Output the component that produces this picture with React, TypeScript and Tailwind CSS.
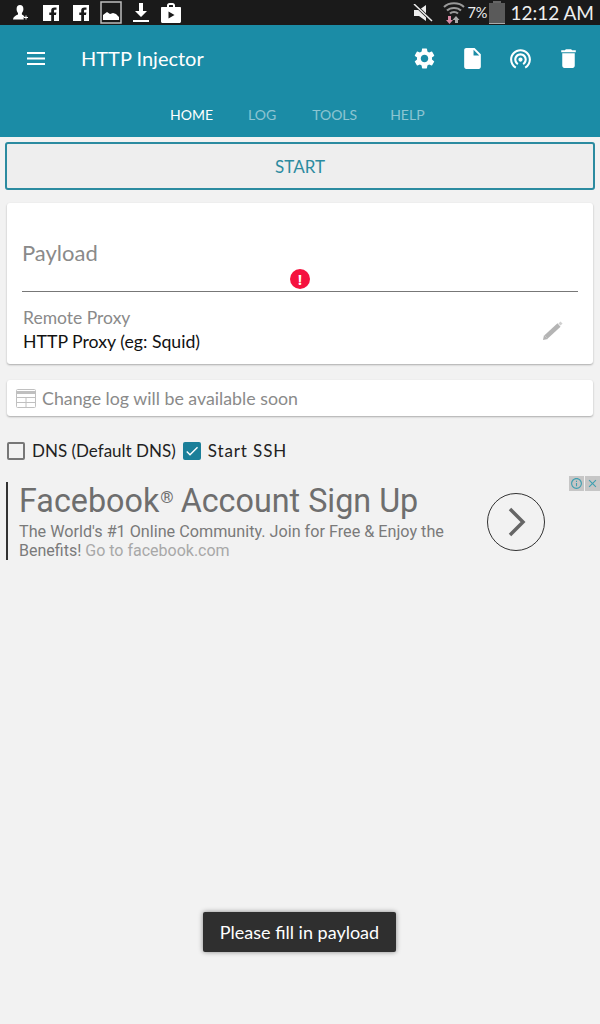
import { MdSettings, MdInsertDriveFile, MdWifiTethering, MdDelete, MdCheck, MdClose, MdInfoOutline } from 'react-icons/md';

const hand = 'font-["Lato",sans-serif]';

function FbIcon() {
  return (
    <svg width="16" height="16" viewBox="0 0 16 16" className="shrink-0">
      <path fill="#fff" d="M0 0h16v16h-5v-6h2l.4-2.6H11V6c0-.8.3-1.2 1.2-1.2h1.3V2.500h-2C9.300 2.500 8.200 3.700 8.200 5.700v1.700H6.300V10h1.900v6H0z" />
    </svg>
  );
}

function StatusLeft() {
  return (
    <div className="flex items-center">
      <svg width="16" height="16" viewBox="0 0 16 16" className="ml-[13px]">
        <path fill="#fff" d="M7 0c2.200 0 3.400 1.600 3.400 3.900 0 1.700-.7 3.100-1.500 4v1.600c1.300.6 2 1.300 2.600 2-.6.500-.9 1.100-.9 1.800 0 .5.100.9.300 1.300H0c0-2.500 2.700-4.200 5-5.100V7.900C4.200 7 3.600 5.600 3.600 3.900 3.600 1.600 4.800 0 7 0z" />
        <path fill="#fff" d="M12.500 10.500h1v1.500H15v1h-1.500v1.500h-1V13H11v-1h1.500z" />
      </svg>
      <div className="ml-[14px]"><FbIcon /></div>
      <div className="ml-[14px]"><FbIcon /></div>
      <svg width="22" height="23" viewBox="0 0 22 23" className="ml-[11px]">
        <rect x="1" y="1" width="20" height="21" fill="none" stroke="#bdbdbd" strokeWidth="1.500" />
        <path fill="#fff" d="M3 19v-5l4-3 3 2 3-1 3 1 3 3v3z" />
      </svg>
      <svg width="16" height="20" viewBox="0 0 16 20" className="ml-[11px]">
        <path fill="#fff" d="M6 0h4v8h4l-6 6-6-6h4zM0 17h16v2H0z" />
      </svg>
      <svg width="20" height="20" viewBox="0 0 20 20" className="ml-[12px]">
        <path fill="#fff" fillRule="evenodd" d="M6 4V2.500C6 1.200 7 0 8.500 0h3C13 0 14 1.200 14 2.500V4h5c.6 0 1 .4 1 1v13.500c0 .8-.7 1.500-1.500 1.500h-17C.7 20 0 19.300 0 18.500V5c0-.6.400-1 1-1zm2 0h4V2.500c0-.3-.2-.5-.5-.5h-3c-.3 0-.5.200-.5.500zM7.500 8.500v7l6-3.500z" />
      </svg>
    </div>
  );
}

function StatusRight() {
  return (
    <div className="flex items-center">
      <svg width="20" height="18" viewBox="0 0 20 18">
        <path fill="#eee" d="M1 6h5l7-5v16l-7-5H1z" />
        <path stroke="#1a1a1a" strokeWidth="3" d="M1 0l18 17" />
        <path stroke="#eee" strokeWidth="1.500" d="M1 0l18 17" />
      </svg>
      <svg width="22" height="23" viewBox="0 0 22 23" className="ml-[10px]">
        <path fill="none" stroke="#999" strokeWidth="2" d="M1 6c5-5 15-5 20 0M4 9.500c3.500-3.500 10.500-3.500 14 0M7 12.500c2-2 6-2 8 0" />
        <path fill="#d889a4" d="M5 15h3v4h2l-3.500 4L3 19h2z" />
        <path fill="#aaa" d="M13 15l3.500 4H15v3h-3v-3h-2.500z" />
      </svg>
      <span className={`ml-[2px] text-[14.500px] text-[#eee] ${hand}`}>7%</span>
      <div className="ml-[2px] flex flex-col items-center">
        <div className="h-[2px] w-[8px] bg-[#666]" />
        <div className="h-[20px] w-[16px] bg-[#5a5a5a]" />
        <div className="h-[1px] w-[16px] bg-[#aaa]" />
      </div>
      <span className={`ml-[5px] text-[19px] leading-none text-[#eee] ${hand}`}>12:12 AM</span>
    </div>
  );
}

function Tab({ label, active, className }: { label: string; active?: boolean; className?: string }) {
  return (
    <span className={`text-[14px] ${hand} ${active ? 'text-white' : 'text-white/50'} ${className ?? ''}`}>{label}</span>
  );
}

export default function App() {
  return (
    <div className="relative flex h-[1024px] w-[600px] flex-col overflow-hidden bg-[#f2f2f2]">
      {/* status bar */}
      <div className="flex h-[25px] items-center justify-between bg-[#1a1a1a] pr-[6px]">
        <StatusLeft />
        <StatusRight />
      </div>

      {/* toolbar + tabs */}
      <div className="h-[112px] bg-[#1b8ca6]">
        <div className="flex h-[66px] items-center pl-[27px]">
          <svg width="18" height="13" viewBox="0 0 18 13">
            <path fill="#fff" d="M0 0h18v2H0zM0 5.500h18v2H0zM0 11h18v2H0z" />
          </svg>
          <span className={`ml-[36px] text-[20px] text-white ${hand}`}>HTTP Injector</span>
          <div className="ml-auto flex items-center gap-[23px] pr-[19px] text-white">
            <MdSettings size={25} />
            <MdInsertDriveFile size={25} />
            <MdWifiTethering size={25} />
            <MdDelete size={25} />
          </div>
        </div>
        <div className="flex pl-[170px] pt-[13px]">
          <Tab label="HOME" active />
          <Tab label="LOG" className="ml-[35px]" />
          <Tab label="TOOLS" className="ml-[36px]" />
          <Tab label="HELP" className="ml-[33px]" />
        </div>
      </div>

      {/* start button */}
      <button
        type="button"
        className={`mx-[5px] mt-[5px] h-[48px] rounded-[3px] border-2 border-[#2b8ba0] bg-[#eeeeee] pt-[2px] text-[17px] text-[#2b8ba0] ${hand}`}
      >
        START
      </button>

      {/* config card */}
      <div className="mx-[7px] mt-[13px] h-[161px] rounded-[3px] bg-white px-[15px] shadow-[0_1px_2px_rgba(0,0,0,0.3)]">
        <div className="relative flex h-[89px] items-end border-b border-[#777] pb-[27px]">
          <span className={`text-[22px] leading-none text-[#8a8a8a] ${hand}`}>Payload</span>
          <div className="absolute bottom-[2px] left-[268px] flex h-[20px] w-[20px] items-center justify-center rounded-full bg-[#f5123f] text-[14px] font-bold text-white">
            !
          </div>
        </div>
        <div className="flex items-center justify-between pt-[16px]">
          <div className="pl-[1px]">
            <div className={`text-[17.500px] leading-[20px] text-[#8a8a8a] ${hand}`}>Remote Proxy</div>
            <div className={`mt-[4px] text-[17.700px] leading-[20px] text-[#111] ${hand}`}>HTTP Proxy (eg: Squid)</div>
          </div>
          <svg width="20" height="20" viewBox="0 0 20 20" className="mr-[15px]">
            <path stroke="#b4b4b4" strokeWidth="4.500" d="M3 17L16 5" />
            <path fill="#b4b4b4" d="M0 20l1-5 4 4z" />
            <path stroke="#d0d0d0" strokeWidth="3" d="M16.500 4.500L18.500 2.500" />
          </svg>
        </div>
      </div>

      {/* change log */}
      <div className="mx-[7px] mt-[16px] flex h-[36px] items-center rounded-[3px] bg-white pl-[9px] shadow-[0_1px_2px_rgba(0,0,0,0.3)]">
        <svg width="20" height="19" viewBox="0 0 20 19" fill="none" stroke="#c0c0c0" strokeWidth="1">
          <rect x="0.500" y="0.500" width="19" height="18" rx="1" />
          <path strokeWidth="3" d="M1 3.500h18" />
          <path d="M1 8.500h18M1 13.500h18M10 8.500V18" />
        </svg>
        <span className={`ml-[6px] text-[17.800px] text-[#8a8a8a] ${hand}`}>Change log will be available soon</span>
      </div>

      {/* options */}
      <div className="mt-[25px] flex h-[20px] items-center pl-[7px]">
        <div className="h-[18px] w-[18px] rounded-[2px] border-2 border-[#777]" />
        <span className={`ml-[7px] text-[17px] text-[#222] ${hand}`}>DNS (Default DNS)</span>
        <div className="ml-[7px] flex h-[18px] w-[18px] items-center justify-center rounded-[2px] bg-[#1b7f99]">
          <MdCheck size={16} className="text-white" />
        </div>
        <span className={`ml-[7px] text-[17px] tracking-[0.9px] text-[#222] ${hand}`}>Start SSH</span>
      </div>

      {/* ad */}
      <div className="relative mt-[21px] flex h-[78px] items-start pl-[6px]">
        <div className="h-[78px] w-[2px] bg-[#333]" />
        <div className="ml-[11px] font-['Roboto',sans-serif]">
          <div className="flex h-[38px] items-center whitespace-nowrap text-[32.300px] leading-[38px] text-[#6e6e6e]">
            Facebook<span className="mb-[8px] ml-[1px] text-[17px] leading-none">®</span>
            <span className="ml-[7px]">Account Sign Up</span>
          </div>
          <div className="mt-[2px] whitespace-nowrap text-[16.200px] leading-[19px] text-[#7a7a7a]">
            The World's #1 Online Community. Join for Free &amp; Enjoy the
          </div>
          <div className="flex gap-[4px] whitespace-nowrap text-[16px] leading-[19px] text-[#7a7a7a]">
            <span>Benefits!</span>
            <span className="text-[#a8a8a8]">Go to facebook.com</span>
          </div>
        </div>
        <div className="absolute left-[487px] top-[11px] flex h-[58px] w-[58px] items-center justify-center rounded-full border border-[#333]">
          <svg width="20" height="30" viewBox="0 0 20 30" fill="none" stroke="#666" strokeWidth="3.500" className="ml-[2px]">
            <path d="M3 2l13 13L3 28" />
          </svg>
        </div>
        <div className="absolute right-0 top-[-6px] flex gap-px">
          <div className="flex h-[15px] w-[15px] items-center justify-center bg-[#c6c6c6] text-[#3f9fb0]"><MdInfoOutline size={13} /></div>
          <div className="flex h-[15px] w-[15px] items-center justify-center bg-[#c6c6c6] text-[#3f9fb0]"><MdClose size={13} /></div>
        </div>
      </div>

      {/* toast */}
      <div className={`absolute left-[203px] top-[912px] flex h-[40px] w-[193px] items-center justify-center rounded-[2px] bg-[#2f2f2f] pt-[1px] text-[18px] text-white shadow-[0_0_5px_rgba(0,0,0,0.45)] ${hand}`}>
        Please fill in payload
      </div>
    </div>
  );
}
